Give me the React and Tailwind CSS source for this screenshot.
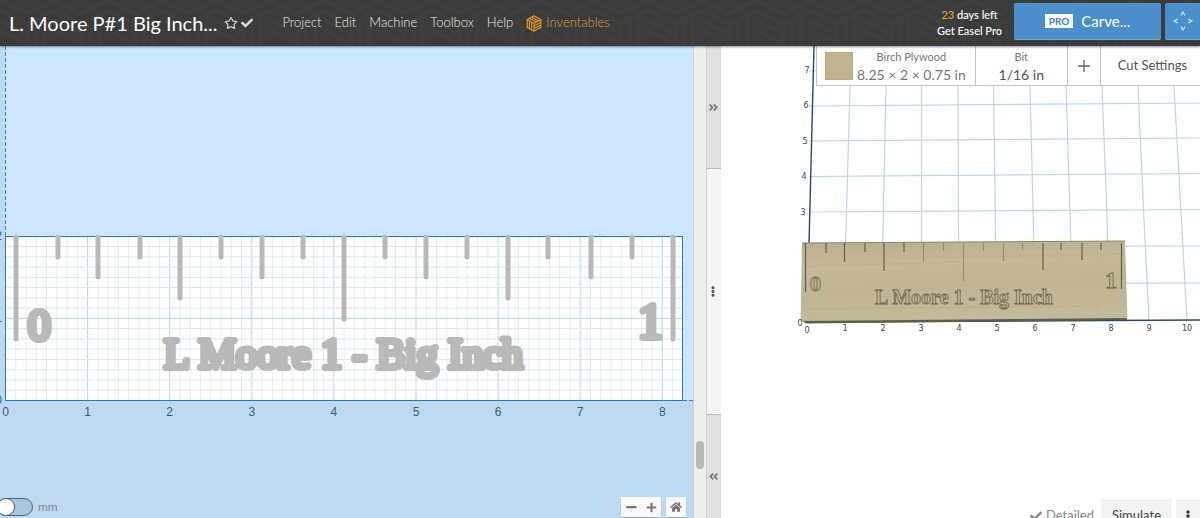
import React, { useState } from 'react';
import {
  FaRegStar,
  FaCheck,
  FaMinus,
  FaPlus,
  FaHome,
  FaEllipsisV,
  FaAngleDoubleRight,
  FaAngleDoubleLeft,
} from 'react-icons/fa';

const menuItems = ['Project', 'Edit', 'Machine', 'Toolbox', 'Help'];

// 2D design: x position and bottom end of every ruler mark
const UNIT = 82.1;
const marks = [
  [16, 339], [58, 257], [98, 277], [140, 257], [180, 298], [221, 257],
  [262, 277], [303, 257], [344, 319], [385, 257], [426, 277], [467, 257],
  [508, 298], [548, 257], [591, 277], [632, 257], [673, 339],
];

// 3D preview
const gridX = [
  [850, 846, 843], [886, 883, 881], [921.5, 921.5, 921.5], [958, 958.5, 959],
  [993.5, 995.5, 997], [1030, 1033.5, 1035], [1066, 1070.5, 1073],
  [1102, 1107.5, 1111], [1138, 1144.5, 1149], [1174, 1182, 1187],
];
const gridY = [[71, 69], [106, 103], [141, 138], [176.5, 173.5], [212, 209.5], [247, 246], [284, 283]];
const previewMarks = [
  [805.5, 292], [826, 253], [844.5, 262], [865, 252], [884, 271], [904, 252],
  [923.5, 262], [943.5, 251], [963.5, 281], [983.5, 251], [1003.5, 261],
  [1022.5, 250], [1043, 270], [1061, 250], [1082, 260], [1101, 250], [1121.5, 289],
];

function InventablesLogo() {
  return (
    <svg viewBox="0 0 18 20" className="h-[17px] w-4" fill="none" stroke="#e89f1c" strokeWidth="1.3" aria-hidden="true">
      <path d="M9 1 L17 5.5 V14.5 L9 19 L1 14.5 V5.5 Z" />
      <path d="M1 5.5 L9 10 V19 M9 10 L17 5.5 M4 4 L12 8.3 M6.5 2.6 L14.5 7" />
      <path d="M3.6 7.5 V15.5 M6.3 9 V17 M9 13 L17 8.7 M9 16 L17 11.7" />
    </svg>
  );
}

function Header() {
  return (
    <header className="relative z-10 flex h-[46px] shrink-0 items-center bg-[#3b3c3a] pl-[9px] text-white shadow-[0_1px_2px_rgba(60,70,90,0.6)]">
      <svg className="absolute inset-0 -z-10 h-full w-full" aria-hidden="true">
        <pattern id="weave" width="54" height="46" patternUnits="userSpaceOnUse">
          <path
            d="M0 0 L27 14 L54 0 M0 10 L27 24 L54 10 M0 20 L27 34 M27 24 V46 M36 20 V46 M45 16 V46 M0 30 L27 44"
            fill="none"
            stroke="#414240"
            strokeWidth="3"
            opacity="0.5"
          />
        </pattern>
        <rect width="100%" height="100%" fill="url(#weave)" />
      </svg>
      <h1 className="text-[20px] leading-6 whitespace-nowrap">L. Moore P#1 Big Inch...</h1>
      <button aria-label="Favorite" className="ml-[7px] text-[#d8d8d8]">
        <FaRegStar className="h-3 w-[14px]" />
      </button>
      <FaCheck className="ml-[3px] h-3 w-3 text-[#dcdcdc]" />
      <nav className="ml-[29px] flex items-center gap-[13px] text-[13px] font-light text-[#e6e6e4]">
        {menuItems.map((item) => (
          <button key={item}>{item}</button>
        ))}
        <a href="#inventables" className="flex items-center gap-1 text-[#dc9c40]">
          <InventablesLogo />
          Inventables
        </a>
      </nav>
      <div className="ml-auto flex items-center self-stretch pb-1">
        <a href="#pro" className="mr-3 pt-1 text-center text-[11px] leading-4 font-medium">
          <span className="text-[#e8a33a]">23</span> days left
          <br />
          Get Easel Pro
        </a>
        <button className="mr-1 flex h-9 w-[147px] items-center justify-center gap-2 rounded-xs bg-[#4a8fcb] text-[15px] shadow-[0_1px_0_#6fa9da]">
          <span className="bg-white px-1 text-[10px] leading-[14px] font-bold text-[#4280b8]">PRO</span>
          Carve...
        </button>
        <button aria-label="Jog machine" className="flex h-9 w-[35px] items-center justify-center rounded-l-xs bg-[#4a8fcb] shadow-[0_1px_0_#6fa9da]">
          <svg viewBox="0 0 20 20" className="h-5 w-5" fill="none" stroke="#d5e7f6" strokeWidth="1.1" aria-hidden="true">
            <path d="M8 4.5 L10 1 L12 4.5 M8 15.5 L10 19 L12 15.5 M4.8 8 L1 10 L4.8 12 M15.2 8 L19 10 L15.2 12" />
          </svg>
        </button>
      </div>
    </header>
  );
}

function DesignDrawing() {
  const minor = Array.from({ length: 65 }, (_, i) => i + 1);
  return (
    <svg
      viewBox="0 46 693 491"
      preserveAspectRatio="xMinYMin slice"
      className="absolute inset-0 h-full w-full"
      role="img"
      aria-label="Ruler design"
    >
      <rect x="0" y="400" width="694" height="140" fill="#bfdaf0" />
      <rect x="0" y="46" width="5" height="354" fill="#bfdaf0" />
      <path d="M5.5 46 V236 M683 400.5 H694" stroke="#3a86bd" strokeDasharray="4 2" />
      <rect x="6" y="236" width="677" height="165" fill="#fff" />
      {minor.map((n) => (
        <line key={n} x1={5.5 + (n * UNIT) / 8} x2={5.5 + (n * UNIT) / 8} y1="237" y2="400" stroke={n % 8 === 0 ? '#b5d8ee' : '#e6edf2'} />
      ))}
      {minor.slice(0, 15).map((n) => (
        <line key={n} x1="6" x2="682" y1={400.5 - (n * UNIT) / 8} y2={400.5 - (n * UNIT) / 8} stroke={n % 8 === 0 ? '#b5d8ee' : '#dbe8f0'} />
      ))}
      <rect x="5.5" y="236.5" width="677" height="164" fill="none" stroke="#2779b3" />
      <g stroke="#b9b9b9" strokeWidth="5" strokeLinecap="round">
        {marks.map(([x, y]) => (
          <line key={x} x1={x} x2={x} y1="237" y2={y} />
        ))}
      </g>
      <g
        fill="#b9b9b9"
        stroke="#b9b9b9"
        strokeWidth="6"
        strokeLinejoin="round"
        className="font-['Liberation_Serif',serif]"
      >
        <text x="28" y="340" fontSize="45">0</text>
        <text x="638" y="338" fontSize="50">1</text>
        <text x="164" y="368" fontSize="42">L Moore 1 - Big Inch</text>
      </g>
      <g fill="#2f5f85" fontSize="12" className="font-['Liberation_Sans',sans-serif]">
        {[0, 1, 2, 3, 4, 5, 6, 7, 8].map((n) => (
          <text key={n} x={5.5 + n * UNIT} y="416" textAnchor="middle">{n}</text>
        ))}
        {[0, 1, 2].map((n) => (
          <text key={n} x="2" y={404 - n * UNIT} textAnchor="end">{n}</text>
        ))}
      </g>
    </svg>
  );
}

function DesignPanel() {
  const [metric, setMetric] = useState(false);
  return (
    <section className="relative flex min-w-0 basis-[693px] flex-col justify-end overflow-hidden bg-[#cce6ff]">
      <DesignDrawing />
      <div className="relative flex items-center justify-between pr-[7px] pb-5">
        <label className="flex items-center gap-[5px] text-[12px] leading-5 text-[#7c8b98]">
          <input
            type="checkbox"
            checked={metric}
            onChange={() => setMetric(!metric)}
            className="-ml-[3px] h-[18px] w-9 appearance-none rounded-full border border-[#4a6880] bg-[#a9c6da] before:block before:h-4 before:w-4 before:rounded-full before:bg-white before:shadow-[0_0_0_1px_#4a6880] checked:before:ml-[18px]"
          />
          mm
        </label>
        <div className="flex gap-[5px] text-[#777]">
          <div className="flex bg-[#f8f8f8] shadow-[0_1px_1px_#98aabb]">
            <button aria-label="Zoom out" className="flex h-5 w-5 items-center justify-center">
              <FaMinus className="h-3 w-[11px]" />
            </button>
            <button aria-label="Zoom in" className="flex h-5 w-5 items-center justify-center">
              <FaPlus className="h-[11px] w-[11px]" />
            </button>
          </div>
          <button aria-label="Home" className="flex h-5 w-5 items-center justify-center bg-[#f8f8f8] shadow-[0_1px_1px_#98aabb]">
            <FaHome className="h-3 w-3" />
          </button>
        </div>
      </div>
    </section>
  );
}

function Splitter() {
  return (
    <div className="flex shrink-0">
      <div className="flex w-[13px] flex-col justify-end border-l border-[#c4d0da] bg-[#eeeeef] px-[2px] pb-[68px]">
        <div className="h-7 rounded-full bg-[#b9b9ba]" />
      </div>
      <div className="flex w-[15px] flex-col border-l border-[#d0d0d0] text-[#777]">
        <button aria-label="Collapse preview" className="flex h-[122px] items-center justify-center bg-[#dfdfdf] pr-[2px]">
          <FaAngleDoubleRight className="h-[11px] w-[11px]" />
        </button>
        <div className="flex grow items-center justify-center border-y border-[#bbb] bg-[#f5f5f5] pr-[2px]">
          <FaEllipsisV className="h-[11px] w-3 text-[#555]" />
        </div>
        <button aria-label="Collapse design" className="flex h-[122px] items-center justify-center bg-[#e0e0e0] pr-[2px]">
          <FaAngleDoubleLeft className="h-[11px] w-[11px]" />
        </button>
      </div>
    </div>
  );
}

function PreviewDrawing() {
  return (
    <svg
      viewBox="721 46 479 491"
      preserveAspectRatio="xMinYMin slice"
      className="absolute inset-0 h-full w-full"
      role="img"
      aria-label="Carving preview"
    >
      <defs>
        <linearGradient id="wood" x1="0" y1="0" x2="0.15" y2="1">
          <stop offset="0" stopColor="#b9af91" />
          <stop offset="0.35" stopColor="#c4ba9a" />
          <stop offset="0.6" stopColor="#beb494" />
          <stop offset="1" stopColor="#c3ba9b" />
        </linearGradient>
      </defs>
      <g fill="none" stroke="#bdd6ea" strokeWidth="1.2">
        {gridX.map(([top, mid, bottom]) => (
          <path key={top} d={`M${top} 46 L${top} 86 L${mid} 230 L${bottom} 321`} />
        ))}
        {gridY.map(([left, right]) => (
          <line key={left} x1="809" y1={left} x2="1200" y2={right} />
        ))}
      </g>
      <path d="M814 46 L807 322 L1200 320" fill="none" stroke="#2c4863" strokeWidth="1.4" />
      <path d="M801 320 L806 323.5 L1127 320 V317 Z" fill="#5c5d50" />
      <path d="M802 243 L1125 241 L1127.5 318 L800.5 321 Z" fill="url(#wood)" />
      <path d="M802 243 L1125 241" stroke="#8c8265" />
      <path d="M900 258 L1124 254 M804 266 L960 262 M804 309 L1100 306" stroke="#aea27d" strokeWidth="2" opacity="0.2" />
      <g stroke="#5e5543" strokeWidth="1.2">
        {previewMarks.map(([x, y], i) => (
          <line key={x} x1={x} x2={x} y1="243" y2={y} opacity={i > 5 && i < 12 ? 0.4 : 0.9} />
        ))}
      </g>
      <g fill="#bfb595" stroke="#6f654c" strokeWidth="0.8" className="font-['Liberation_Serif',serif]">
        <text x="875" y="304" fontSize="20" fontWeight="bold">L Moore 1 - Big Inch</text>
        <text x="810" y="291" fontSize="22" fontWeight="bold">0</text>
        <text x="1105" y="288" fontSize="24" fontWeight="bold">1</text>
      </g>
      <g fill="#36475a" fontSize="8" className="font-['DejaVu_Sans',sans-serif]" textAnchor="middle">
        {[0, 1, 2, 3, 4, 5, 6, 7, 8, 9, 10].map((n) => (
          <text key={n} x={807 + n * 38} y={n === 0 ? 333 : 331}>{n}</text>
        ))}
        {[3, 4, 5, 6, 7].map((n) => (
          <text key={n} x={800 + n} y={321 - n * 35.5}>{n}</text>
        ))}
        <text x="800" y="326">0</text>
      </g>
    </svg>
  );
}

function PreviewPanel() {
  return (
    <section className="relative flex min-w-0 flex-1 flex-col justify-between overflow-hidden bg-white text-[#555]">
      <PreviewDrawing />
      <div className="relative ml-[95px] flex h-10 border-b border-l border-[#c4c4c4] bg-white">
        <button className="flex items-center gap-1 border-r border-[#c4c4c4] pr-[9px] pl-2 text-[#777]">
          <span className="h-7 w-7 border border-[#b5ab88] bg-[#bfb38f]" />
          <span className="flex flex-col whitespace-nowrap">
            <span className="text-[11px] leading-[18px]">Birch Plywood</span>
            <span className="text-[14px] leading-[18px]">8.25 × 2 × 0.75 in</span>
          </span>
        </button>
        <button className="flex w-[92px] flex-col items-center justify-center border-r border-[#c4c4c4]">
          <span className="text-[11px] leading-[18px] text-[#777]">Bit</span>
          <span className="text-[14px] leading-[18px]">1/16 in</span>
        </button>
        <button aria-label="Add bit" className="flex w-[33px] items-center justify-center border-r border-[#c4c4c4]">
          <svg viewBox="0 0 12 12" className="h-3 w-3" stroke="#666" strokeWidth="1.3" aria-hidden="true">
            <path d="M6 0 V12 M0 6 H12" />
          </svg>
        </button>
        <button className="grow pl-1 text-[13px] whitespace-nowrap">Cut Settings</button>
      </div>
      <div className="relative flex items-center justify-end gap-1 pb-1">
        <span className="mr-[3px] flex items-center gap-1 text-[13px] text-[#8a8a8a]">
          <FaCheck className="h-3 w-3" />
          Detailed
        </span>
        <button className="h-[34px] w-[71px] bg-[#f2f2f2] text-[13px] text-[#444]">Simulate</button>
        <button aria-label="More options" className="flex h-[34px] w-6 items-center justify-center bg-[#f2f2f2]">
          <FaEllipsisV className="h-3 w-3 text-[#333]" />
        </button>
      </div>
    </section>
  );
}

function App() {
  return (
    <div className="flex h-screen flex-col overflow-hidden font-['Lato',sans-serif]">
      <Header />
      {/* Panels run a little past the bottom edge of the window */}
      <main className="flex h-[calc(100%-27px)] shrink-0">
        <DesignPanel />
        <Splitter />
        <PreviewPanel />
      </main>
    </div>
  );
}

export default App;
